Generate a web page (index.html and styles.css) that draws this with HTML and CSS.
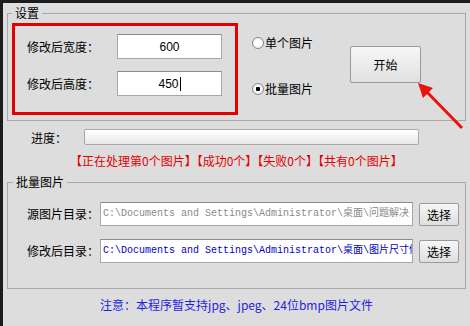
FILE: index.html
```html
<!DOCTYPE html>
<html lang="zh-CN">
<head>
    <meta charset="UTF-8" />
    <title>图片尺寸修改</title>
    <link rel="stylesheet" href="styles.css">
</head>
<body>
    <div class="app">
        <fieldset class="group settings">
            <legend>设置</legend>
            <div class="size-box">
                <div class="size-row">
                    <label class="size-label">修改后宽度：</label>
                    <input class="size-input" type="text" value="600" />
                </div>
                <div class="size-row">
                    <label class="size-label">修改后高度：</label>
                    <div class="size-input fake">450<span class="caret"></span></div>
                </div>
            </div>
            <div class="radios">
                <label class="radio-row"><input type="radio" name="mode" />单个图片</label>
                <label class="radio-row"><input type="radio" name="mode" checked />批量图片</label>
            </div>
            <button class="start-btn" type="button">开始</button>
        </fieldset>

        <div class="progress-row">
            <span class="progress-label">进度：</span>
            <div class="progress-bar"></div>
        </div>
        <div class="status">【正在处理第0个图片】【成功0个】【失败0个】【共有0个图片】</div>

        <fieldset class="group batch">
            <legend>批量图片</legend>
            <div class="dir-row">
                <label class="dir-label">源图片目录：</label>
                <div class="dir-input source">C:\Documents and Settings\Administrator\桌面\问题解决</div>
                <button class="pick-btn" type="button">选择</button>
            </div>
            <div class="dir-row">
                <label class="dir-label">修改后目录：</label>
                <div class="dir-input target">C:\Documents and Settings\Administrator\桌面\图片尺寸修改</div>
                <button class="pick-btn" type="button">选择</button>
            </div>
        </fieldset>

        <div class="note">注意：本程序暂支持jpg、jpeg、24位bmp图片文件</div>

        <svg class="arrow" width="470" height="326" viewBox="0 0 470 326">
            <line x1="462" y1="128" x2="425" y2="90" stroke="#e8140f" stroke-width="3" />
            <polygon points="418,83 433,88 423,98" fill="#e8140f" />
        </svg>
    </div>
</body>
</html>
```

FILE: styles.css
```css
* {
    box-sizing: border-box;
}

body {
    margin: 0;
    font-family: "Noto Sans CJK SC", "Liberation Sans", sans-serif;
    font-size: 12px;
    color: #000;
}

.app {
    position: relative;
    width: 470px;
    height: 326px;
    background-color: #dddddd;
    border-top: 3px solid #1c1c1c;
    border-left: 3px solid #1c1c1c;
    overflow: hidden;
}

.group {
    width: 459px;
    margin: 2px 0 0 4px;
    border: 1px solid #a9a9a9;
    padding: 2px 4px 5px 4px;
    min-width: 0;
}

.group legend {
    padding: 0 3px;
    line-height: 16px;
    font-size: 12px;
}

/* settings */
.settings {
    display: flex;
    align-items: flex-start;
}

.size-box {
    width: 226px;
    height: 92px;
    border: 3px solid #e30000;
    padding: 8px 0 0 12px;
    display: flex;
    flex-direction: column;
    gap: 12px;
}

.size-row {
    display: flex;
    align-items: center;
}

.size-label {
    width: 90px;
    line-height: 16px;
}

.size-input {
    width: 105px;
    height: 25px;
    border: 1px solid #a7a7a7;
    border-top-color: #8c8c8c;
    background: #fff;
    font-family: "Liberation Sans", sans-serif;
    font-size: 12px;
    text-align: center;
    padding: 0;
    outline: none;
}

.size-input.fake {
    display: flex;
    align-items: center;
    justify-content: center;
}

.caret {
    display: inline-block;
    width: 1px;
    height: 14px;
    background: #000;
    margin-left: 1px;
}

.radios {
    width: 98px;
    margin-left: 14px;
    padding-top: 12px;
    display: flex;
    flex-direction: column;
    gap: 30px;
}

.radio-row {
    display: flex;
    align-items: center;
    line-height: 16px;
}

.radio-row input {
    appearance: none;
    width: 12px;
    height: 12px;
    margin: 0 1px 0 0;
    border: 1px solid #8a8a8a;
    border-radius: 50%;
    background: radial-gradient(circle, #ffffff 40%, #e2e2e2 100%);
}

.radio-row input:checked {
    background: radial-gradient(circle, #000 0, #000 2px, #ffffff 2.5px, #e2e2e2 100%);
}

.start-btn {
    width: 71px;
    height: 37px;
    margin-top: 23px;
    border: 1px solid #9a9a9a;
    border-radius: 2px;
    background: linear-gradient(#f7f7f7, #e0e0e0);
    font-family: inherit;
    font-size: 12px;
    padding: 0;
}

/* progress */
.progress-row {
    display: flex;
    align-items: center;
    margin-top: 8px;
    height: 16px;
}

.progress-label {
    width: 53px;
    margin-left: 28px;
}

.progress-bar {
    width: 335px;
    height: 16px;
    border: 1px solid #a8a8a8;
    border-radius: 2px;
    background: linear-gradient(#ffffff, #e8e8e8);
}

.status {
    margin-top: 8px;
    padding-left: 67px;
    line-height: 16px;
    color: #e30000;
    white-space: nowrap;
}

/* batch */
.batch {
    margin-top: 5px;
    padding: 12px 4px 25px 5px;
    display: flex;
    flex-direction: column;
    gap: 13px;
}

.dir-row {
    display: flex;
    align-items: center;
}

.dir-label {
    width: 73px;
    margin-left: 14px;
    line-height: 16px;
}

.dir-input {
    width: 313px;
    height: 24px;
    border: 1px solid #a7a7a7;
    border-top-color: #8c8c8c;
    background: #fff;
    padding: 0 2px;
    font-family: "Liberation Mono", "Noto Sans CJK SC", monospace;
    font-size: 10px;
    line-height: 22px;
    white-space: nowrap;
    overflow: hidden;
}

.dir-input.source {
    color: #8a8a8a;
}

.dir-input.target {
    color: #0000c8;
}

.pick-btn {
    width: 40px;
    height: 23px;
    margin-left: 6px;
    border: 1px solid #9a9a9a;
    border-radius: 2px;
    background: linear-gradient(#f7f7f7, #dedede);
    font-family: inherit;
    font-size: 12px;
    padding: 0;
}

.note {
    margin-top: 8px;
    line-height: 16px;
    text-align: center;
    color: #1f1fe0;
}

.arrow {
    position: absolute;
    left: -3px;
    top: -3px;
    pointer-events: none;
}
```
